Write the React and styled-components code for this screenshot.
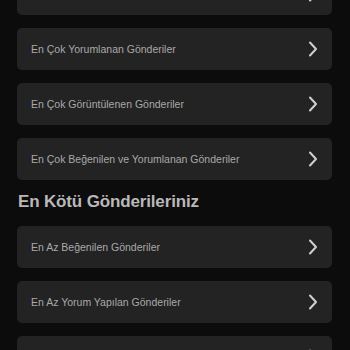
import styled, { createGlobalStyle } from "styled-components";

const GlobalStyle = createGlobalStyle`
  html, body {
    margin: 0;
    padding: 0;
    background: #0c0c0c;
    font-family: "Liberation Sans", Arial, sans-serif;
  }
`;

const Page = styled.div`
  width: 350px;
  height: 350px;
  overflow: hidden;
  background: #0c0c0c;
`;

const Content = styled.div`
  display: flex;
  flex-direction: column;
  padding: 0 18px 0 17px;
  margin-top: -27px;
`;

const List = styled.div`
  display: flex;
  flex-direction: column;
  gap: 13px;
`;

const Card = styled.div`
  height: 42px;
  border-radius: 5px;
  background: #232323;
  display: flex;
  align-items: center;
  justify-content: space-between;
  padding: 0 14px 0 14px;
  box-sizing: border-box;
`;

const Label = styled.span`
  font-size: 10.5px;
  color: #a9a9a9;
`;

const Heading = styled.h2`
  margin: 12px 0 14px 1px;
  font-size: 17px;
  font-weight: 700;
  color: #b9b9b9;
  line-height: 20px;
  letter-spacing: -0.15px;
`;

const Chevron = () => (
  <svg width="10" height="16" viewBox="0 0 10 16">
    <path
      d="M2 1.5 L8 8 L2 14.5"
      fill="none"
      stroke="#cfcfcf"
      strokeWidth="2"
      strokeLinecap="round"
      strokeLinejoin="round"
    />
  </svg>
);

const Row = ({ label }) => (
  <Card>
    <Label>{label}</Label>
    <Chevron />
  </Card>
);

const best = [
  "En Çok Beğenilen Gönderiler",
  "En Çok Yorumlanan Gönderiler",
  "En Çok Görüntülenen Gönderiler",
  "En Çok Beğenilen ve Yorumlanan Gönderiler",
];

const worst = [
  "En Az Beğenilen Gönderiler",
  "En Az Yorum Yapılan Gönderiler",
  "En Az Görüntülenen Gönderiler",
];

export default function App() {
  return (
    <Page>
      <GlobalStyle />
      <Content>
        <List>
          {best.map((l) => (
            <Row key={l} label={l} />
          ))}
        </List>
        <Heading>En Kötü Gönderileriniz</Heading>
        <List>
          {worst.map((l) => (
            <Row key={l} label={l} />
          ))}
        </List>
      </Content>
    </Page>
  );
}
